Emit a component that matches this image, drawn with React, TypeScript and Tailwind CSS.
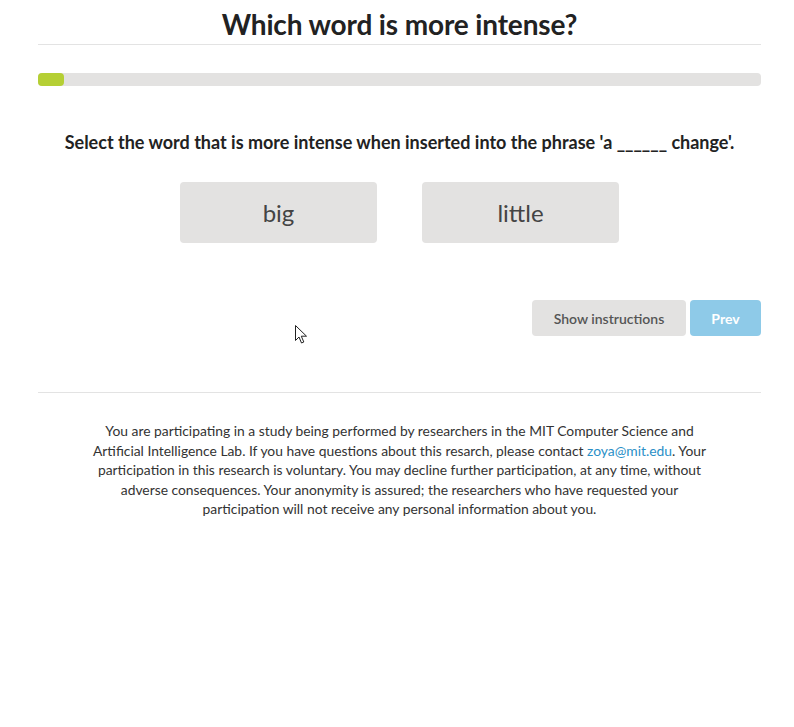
import React from "react";

export default function App() {
  return (
    <div className="relative min-h-[727px] w-[794px] bg-white" style={{ fontFamily: "Lato, 'Open Sans', sans-serif" }}>
      <div className="ml-[38px] w-[723px]">
        <h1 className="pt-[5px] text-center text-[28px] font-bold leading-[38px] tracking-[-0.005em] text-[#222]">Which word is more intense?</h1>
        <div className="mt-[1px] h-px bg-[#e3e3e3]" />
        <div className="mt-[28px] h-[13px] rounded-[4px] bg-[#e3e2e1]">
          <div className="h-[13px] w-[26px] rounded-[4px] bg-[#b5cf34]" />
        </div>
        <p className="mt-[43px] text-center text-[18px] font-bold leading-[26px] text-[#222]">
          Select the word that is more intense when inserted into the phrase 'a ______ change'.
        </p>
        <div className="mt-[27px] flex justify-center gap-[45px]">
          <button className="h-[61px] w-[197px] rounded-[4px] bg-[#e3e2e1] text-[24px] text-[#444]">big</button>
          <button className="h-[61px] w-[197px] rounded-[4px] bg-[#e3e2e1] text-[24px] text-[#444]">little</button>
        </div>
        <div className="mt-[57px] flex justify-end gap-[4px]">
          <button className="h-[36px] w-[154px] rounded-[4px] bg-[#e3e2e1] text-[14px] font-semibold text-[#555]">Show instructions</button>
          <button className="h-[36px] w-[71px] rounded-[4px] bg-[#8ecae8] text-[14px] font-bold text-white">Prev</button>
        </div>
        <div className="mt-[56px] h-px bg-[#e3e3e3]" />
        <p className="mx-auto mt-[28px] w-[630px] text-center text-[13.85px] leading-[19.5px] text-[#333]">
          You are participating in a study being performed by researchers in the MIT Computer Science and Artificial Intelligence Lab. If you have questions about this resarch, please contact{" "}
          <a className="text-[#2a8fc7]">zoya@mit.edu</a>. Your participation in this research is voluntary. You may decline further participation, at any time, without adverse consequences. Your anonymity is assured; the researchers who have requested your participation will not receive any personal information about you.
        </p>
      </div>
      <svg className="absolute left-[295px] top-[325px]" width="13" height="20" viewBox="0 0 13 20">
        <path d="M0.5 0.5 L0.5 15.5 L4 12 L6.5 18 L8.8 17 L6.3 11.2 L11.5 11.2 Z" fill="white" stroke="#222" strokeWidth="1" strokeLinejoin="round" />
      </svg>
    </div>
  );
}
